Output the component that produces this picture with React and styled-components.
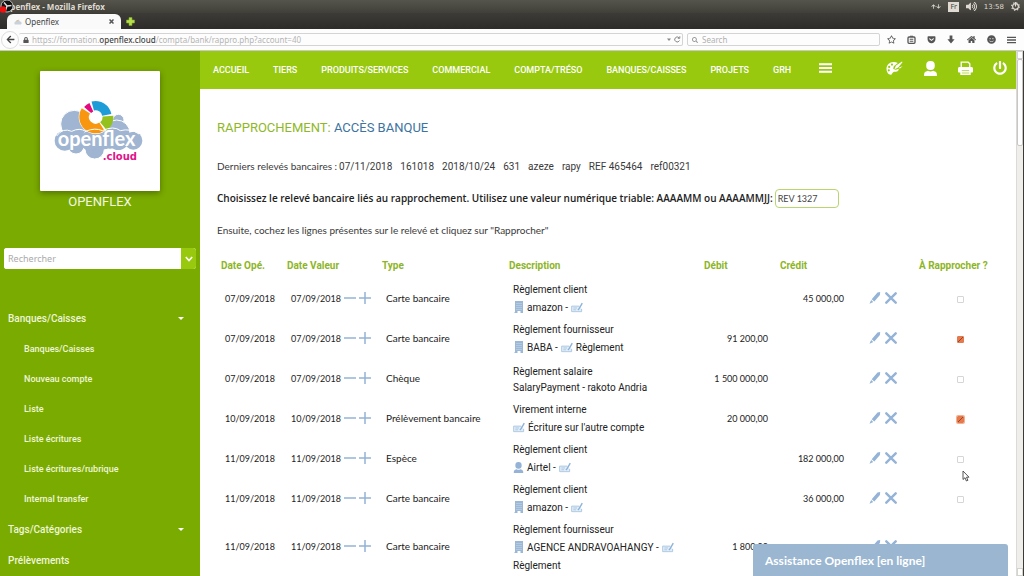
import React, {useState} from 'react';
import styled, {createGlobalStyle, css} from 'styled-components';
import {FaArrowDown, FaArrowLeft, FaArrowUp, FaHome, FaLock, FaPowerOff, FaRegStar, FaSearch, FaSmile, FaVolumeUp} from 'react-icons/fa';
import {FaGetPocket} from 'react-icons/fa6';

const navLinks = ['ACCUEIL', 'TIERS', 'PRODUITS/SERVICES', 'COMMERCIAL', 'COMPTA/TRÉSO', 'BANQUES/CAISSES', 'PROJETS', 'GRH'];

const subLinks = ['Banques/Caisses', 'Nouveau compte', 'Liste', 'Liste écritures', 'Liste écritures/rubrique', 'Internal transfer'];

const statements = ['07/11/2018', '161018', '2018/10/24', '631', 'azeze', 'rapy', 'REF 465464', 'ref00321'];

const entries = [
    {id: 1, date: '07/09/2018', type: 'Carte bancaire', title: 'Règlement client', icon: 'company', name: 'amazon -', cheque: true, credit: '45 000,00'},
    {id: 2, date: '07/09/2018', type: 'Carte bancaire', title: 'Règlement fournisseur', icon: 'company', name: 'BABA -', cheque: true, after: 'Règlement', debit: '91 200,00', checked: true},
    {id: 3, date: '07/09/2018', type: 'Chèque', title: 'Règlement salaire', note: 'SalaryPayment - rakoto Andria', debit: '1 500 000,00'},
    {id: 4, date: '10/09/2018', type: 'Prélèvement bancaire', title: 'Virement interne', cheque: true, after: "Écriture sur l'autre compte", debit: '20 000,00', checked: true, focused: true},
    {id: 5, date: '11/09/2018', type: 'Espèce', title: 'Règlement client', icon: 'person', name: 'Airtel -', cheque: true, credit: '182 000,00'},
    {id: 6, date: '11/09/2018', type: 'Carte bancaire', title: 'Règlement client', icon: 'company', name: 'amazon -', cheque: true, credit: '36 000,00'},
    {id: 7, date: '11/09/2018', type: 'Carte bancaire', title: 'Règlement fournisseur', icon: 'company', name: 'AGENCE ANDRAVOAHANGY -', cheque: true, note: 'Règlement', debit: '1 800,00'},
];

const PersonIcon = ({size = 14}) => (
    <svg width={size} height={size} viewBox="0 0 14 14" fill="currentColor" aria-hidden="true">
        <rect x="3" y="0" width="8" height="8.5" rx="3.8"/>
        <path d="M1 14v-1.6C1 10.200 3.200 9.600 4.600 9.200c1.400.9 3.400.9 4.800 0 1.400.4 3.600 1 3.600 3.200V14z"/>
    </svg>
);

const PaletteIcon = () => (
    <svg width="17" height="15" viewBox="0 0 17 15" aria-hidden="true">
        <path fill="currentColor" fillRule="evenodd" d="M7.500 1C3.500 1 .5 4 .5 7.800c0 3.200 1.800 6 4.200 6 1.800 0 1.300-2.200 2.800-2.800 2-.7 5 .3 5.300-3.300L9.800 8.700 7.200 8l.6-2.700L11.800 2C10.600 1.300 9.200 1 7.500 1zM6 2.500a1.100 1.100 0 1 1 0 2.200 1.100 1.100 0 0 1 0-2.200zM3.200 4.800a1.100 1.100 0 1 1 0 2.200 1.100 1.100 0 0 1 0-2.200zM2.800 8.200a1.100 1.100 0 1 1 0 2.200 1.100 1.100 0 0 1 0-2.200z"/>
        <path fill="currentColor" d="M16.500 1.200 12.200 6.500 8.500 8.200l1.300-3.400L16 .5zM13 6.500l3.500-1.200-2.800 2.500z"/>
    </svg>
);

const PrinterIcon = () => (
    <svg width="15" height="15" viewBox="0 0 15 15" aria-hidden="true">
        <path fill="none" stroke="currentColor" strokeWidth="1.300" d="M3.200 6.500V1.200h7l1.600 1.600v3.700"/>
        <path fill="currentColor" d="M1.500 6h12c.9 0 1.500.6 1.500 1.500v3c0 .6-.4 1-1 1h-1.300V14H2.300v-2.500H1c-.6 0-1-.4-1-1v-3C0 6.600.6 6 1.500 6z"/>
        <path stroke="#98c90f" strokeWidth=".7" d="M3.800 9.600h7.400M3.800 12h7.400"/>
    </svg>
);

const MenuIcon = ({width, height}) => (
    <svg width={width} height={height} viewBox="0 0 12 9" stroke="currentColor" strokeWidth="1.800" aria-hidden="true">
        <path d="M0 1h12M0 4.500h12M0 8h12"/>
    </svg>
);

const ClipboardIcon = () => (
    <svg width="9" height="9" viewBox="0 0 9 9" fill="none" stroke="currentColor" aria-hidden="true">
        <rect x="1" y="2" width="7" height="6.300" rx="1" strokeWidth="1.300"/>
        <path d="M3 1.200h3M2.700 4.300h3.600M2.700 6.200h3.600" strokeWidth="1.100"/>
    </svg>
);

const DownloadIcon = () => (
    <svg width="8" height="9" viewBox="0 0 8 9" fill="currentColor" aria-hidden="true">
        <path d="M2.600.5h2.800v3.700h2.200L4 8.500.4 4.200h2.200z"/>
    </svg>
);

const CompanyIcon = () => (
    <svg width="11" height="12" viewBox="0 0 11 12" aria-hidden="true">
        <path fill="#9bb8d6" d="M2 0h8v12H7.500v-2h-3v2H1.500V11H2z"/>
        <path stroke="#c6d7e8" strokeWidth=".6" d="M3 2.500h6M3 4.500h6M3 6.500h6M3 8.500h6"/>
    </svg>
);

const ChequeIcon = () => (
    <svg width="12" height="11" viewBox="0 0 13 11" fill="none" aria-hidden="true">
        <path d="M9 4H.7v6h10.800V7" fill="#e3edf6" stroke="#a9c7e3"/>
        <path d="M2.500 6h4M2.500 8h3" stroke="#a9c7e3"/>
        <path d="M12.200.8 9 6.500 7.500 8.200" stroke="#8db3d9" strokeWidth="1.500"/>
    </svg>
);

const MinusIcon = () => (
    <svg width="12" height="12" viewBox="0 0 12 12" stroke="currentColor" strokeWidth="1.500" aria-hidden="true">
        <path d="M0 6h12"/>
    </svg>
);

const PlusIcon = () => (
    <svg width="12" height="12" viewBox="0 0 12 12" stroke="currentColor" strokeWidth="1.500" aria-hidden="true">
        <path d="M0 6h12M6 0v12"/>
    </svg>
);

const PencilIcon = () => (
    <svg width="12" height="12" viewBox="0 0 12 12" aria-hidden="true">
        <path fill="currentColor" d="M8.500.5 11.200 0l-.3 2.900L5.300 9.500 2.700 7.300zM2.100 8.100l2.200 1.800L.5 11.800z"/>
    </svg>
);

const CrossIcon = () => (
    <svg width="12" height="12" viewBox="0 0 12 12" stroke="currentColor" strokeWidth="2.400" strokeLinecap="round" aria-hidden="true">
        <path d="M1.300 1.300l9.400 9.400M10.700 1.300l-9.400 9.400"/>
    </svg>
);

// A slice of the ring in the logo, between two angles in degrees
const ringSlice = (from, to, outer, inner) => {
    const point = (angle, radius) => {
        const rad = angle * Math.PI / 180;
        return `${(287 + Math.cos(rad) * radius).toFixed(1)} ${(171 + Math.sin(rad) * radius).toFixed(1)}`;
    };
    return `M${point(from, outer)}A${outer} ${outer} 0 0 1 ${point(to, outer)}L${point(to, inner)}A${inner} ${inner} 0 0 0 ${point(from, inner)}Z`;
};

const Logo = () => (
    <svg width="120" height="120" viewBox="120 33 360 360" role="img" aria-label="openflex.cloud">
        <g fill="#9fb5d1" stroke="#fff" strokeWidth="3">
            <circle cx="355" cy="180" r="17"/>
            <circle cx="223" cy="192" r="41"/>
            <circle cx="284" cy="268" r="29"/>
            <circle cx="228" cy="258" r="24"/>
            <circle cx="350" cy="220" r="40"/>
            <circle cx="330" cy="246" r="22"/>
        </g>
        <g fill="#9fb5d1">
            <circle cx="194" cy="242" r="30"/>
            <circle cx="229" cy="238" r="27"/>
            <circle cx="270" cy="242" r="30"/>
            <circle cx="312" cy="240" r="28"/>
            <circle cx="355" cy="238" r="32"/>
            <circle cx="400" cy="242" r="27"/>
        </g>
        <circle cx="287" cy="171" r="51" fill="#fff"/>
        <path d={ringSlice(-105, -11, 48, 20)} fill="#1d9cd8"/>
        <path d={ringSlice(-4, 50, 53, 21)} fill="#95c11f"/>
        <path d={ringSlice(57, 212, 49, 20)} fill="#f9960f"/>
        <path d={ringSlice(221, 246, 46, 18)} fill="#e5087e"/>
        <path d="M170 228q18-26 45-14 24-12 42 0 28-12 50-2 34-16 54 0 30-8 56 10" fill="none" stroke="#fff" strokeWidth="3"/>
        <LogoText x="173" y="257" fontSize="60" fill="#fff">openflex</LogoText>
        <LogoSuffix x="308" y="299" fontSize="30" fill="#e0148a">.cloud</LogoSuffix>
    </svg>
);

const App = () => {
    const [checked, setChecked] = useState(entries.filter(entry => entry.checked).map(entry => entry.id));

    const toggle = (id) => {
        setChecked(checked.includes(id) ? checked.filter(item => item !== id) : [...checked, id]);
    };

    return (
        <Window>
            <GlobalStyle/>
            <TitleBar>
                <WindowTitle>Openflex - Mozilla Firefox</WindowTitle>
                <Recorder width="14" height="13" viewBox="0 0 14 13" aria-hidden="true">
                    <circle cx="7" cy="6" r="6" fill="#111" stroke="#ddd" strokeWidth=".8"/>
                    <path d="M7 6 4 2.500M7 6l4.500-.5M7 6 5.500 10.500" stroke="#ddd" strokeWidth="1.400"/>
                    <circle cx="3" cy="9.500" r="3.200" fill="#f01010"/>
                </Recorder>
                <Indicators>
                    <Arrows><FaArrowUp/><FaArrowDown/></Arrows>
                    <Language>Fr</Language>
                    <FaVolumeUp size={11}/>
                    <span>13:58</span>
                    <svg width="9" height="9" viewBox="0 0 10 10" fill="none" stroke="currentColor" aria-hidden="true">
                        <circle cx="5" cy="5" r="3.200" strokeWidth="1.300"/>
                        <circle cx="5" cy="5" r="4.300" strokeWidth="1.200" strokeDasharray="1.500 1.900"/>
                        <path d="M5 0v5" strokeWidth="1.300"/>
                    </svg>
                </Indicators>
            </TitleBar>
            <TabStrip>
                <Tab>
                    <svg width="8" height="6" viewBox="0 0 8 6" aria-hidden="true">
                        <path d="M1 5.500a1.800 1.800 0 0 1 .5-3 2.500 2.500 0 0 1 4.500 0 1.600 1.600 0 0 1 .8 3z" fill="#c8d2dc"/>
                        <path d="M3 2.500 4.500.8" stroke="#f5b35a"/>
                    </svg>
                    <TabTitle>Openflex</TabTitle>
                    <TabButton aria-label="Fermer l'onglet">
                        <svg width="5" height="5" viewBox="0 0 5 5" stroke="#555" strokeWidth="1.500"><path d="M.5.5l4 4M4.500.5l-4 4"/></svg>
                    </TabButton>
                </Tab>
                <TabButton aria-label="Nouvel onglet">
                    <svg width="9" height="9" viewBox="0 0 9 9"><path d="M3 .5h3V3h2.500v3H6v2.500H3V6H.5V3H3z" fill="#b5e04a" stroke="#7fa82a" strokeWidth=".6"/></svg>
                </TabButton>
            </TabStrip>
            <Toolbar>
                <BackButton aria-label="Retour"><FaArrowLeft size={9}/></BackButton>
                <AddressBar>
                    <FaLock size={6}/>
                    <Address>https://formation.<b>openflex.cloud</b>/compta/bank/rappro.php?account=40</Address>
                    <svg width="14" height="7" viewBox="0 0 14 7" fill="none" stroke="#888" aria-hidden="true">
                        <path d="M0 2.500h4L2 5z" fill="#888" stroke="none"/>
                        <path d="M12.500 4.500A2.500 2.500 0 1 1 12 1.700M12.800.3v2h-2"/>
                    </svg>
                </AddressBar>
                <SearchBar>
                    <FaSearch size={6}/>
                    <input type="search" placeholder="Search" aria-label="Search"/>
                </SearchBar>
                <BrowserIcons>
                    <FaRegStar size={9}/>
                    <ClipboardIcon/>
                    <FaGetPocket size={9}/>
                    <DownloadIcon/>
                    <FaHome size={9}/>
                    <FaSmile size={9}/>
                    <MenuIcon width={9} height={8}/>
                </BrowserIcons>
            </Toolbar>
            <Page>
                <Sidebar>
                    <LogoCard><Logo/></LogoCard>
                    <Brand>OPENFLEX</Brand>
                    <SideSearch>
                        <input type="text" placeholder="Rechercher" aria-label="Rechercher"/>
                        <button aria-label="Options">
                            <svg width="8" height="6" viewBox="0 0 8 6" fill="none" stroke="#fff" strokeWidth="1.600"><path d="M.8 1 4 4.500 7.200 1"/></svg>
                        </button>
                    </SideSearch>
                    <nav>
                        <SideLink href="#">Banques/Caisses<Caret/></SideLink>
                        {subLinks.map(link => <SideLink key={link} href="#" $sub>{link}</SideLink>)}
                        <SideLink href="#">Tags/Catégories<Caret/></SideLink>
                        <SideLink href="#">Prélèvements</SideLink>
                    </nav>
                </Sidebar>
                <Main>
                    <NavBar>
                        <NavLinks>
                            {navLinks.map(link => <NavLink key={link} href="#">{link}</NavLink>)}
                        </NavLinks>
                        <NavButton aria-label="Menu"><MenuIcon width={13} height={10}/></NavButton>
                        <NavTools>
                            <NavButton aria-label="Thème"><PaletteIcon/></NavButton>
                            <NavButton aria-label="Compte"><PersonIcon size={15}/></NavButton>
                            <NavButton aria-label="Imprimer"><PrinterIcon/></NavButton>
                            <NavButton aria-label="Déconnexion"><FaPowerOff size={14}/></NavButton>
                        </NavTools>
                    </NavBar>
                    <Content>
                        <Title>RAPPROCHEMENT: <span>ACCÈS BANQUE</span></Title>
                        <Line>
                            Derniers relevés bancaires :
                            <Statements>{statements.map(item => <span key={item}>{item}</span>)}</Statements>
                        </Line>
                        <Line>
                            <Label htmlFor="releve">Choisissez le relevé bancaire liés au rapprochement. Utilisez une valeur numérique triable: AAAAMM ou AAAAMMJJ:</Label>
                            <StatementInput id="releve" type="text" defaultValue="REV 1327"/>
                        </Line>
                        <Line>Ensuite, cochez les lignes présentes sur le relevé et cliquez sur "Rapprocher"</Line>
                        <Table>
                            <colgroup>
                                <Col $width={66}/>
                                <Col $width={95}/>
                                <Col $width={127}/>
                                <Col $width={195}/>
                                <Col $width={76}/>
                                <Col $width={76}/>
                                <Col $width={63}/>
                                <Col $width={85}/>
                            </colgroup>
                            <thead>
                                <tr>
                                    <th>Date Opé.</th>
                                    <th>Date Valeur</th>
                                    <th>Type</th>
                                    <th>Description</th>
                                    <th>Débit</th>
                                    <th>Crédit</th>
                                    <th></th>
                                    <th>À Rapprocher ?</th>
                                </tr>
                            </thead>
                            <tbody>
                                {entries.map(entry => (
                                    <tr key={entry.id}>
                                        <DateCell>{entry.date}</DateCell>
                                        <DateCell>
                                            <Group $gap={3}>
                                                {entry.date}
                                                <IconButton aria-label="Reculer la date"><MinusIcon/></IconButton>
                                                <IconButton aria-label="Avancer la date"><PlusIcon/></IconButton>
                                            </Group>
                                        </DateCell>
                                        <td>{entry.type}</td>
                                        <td>
                                            <Description>
                                                <DescriptionLine>{entry.title}</DescriptionLine>
                                                {entry.cheque && (
                                                    <DescriptionLine $tall>
                                                        {entry.icon === 'company' && <CompanyIcon/>}
                                                        {entry.icon === 'person' && <Blue><PersonIcon size={11}/></Blue>}
                                                        {entry.name}
                                                        <ChequeIcon/>
                                                        {entry.after}
                                                    </DescriptionLine>
                                                )}
                                                {entry.note && <DescriptionLine>{entry.note}</DescriptionLine>}
                                            </Description>
                                        </td>
                                        <Amount>{entry.debit}</Amount>
                                        <Amount>{entry.credit}</Amount>
                                        <td>
                                            <Group $gap={4} $center>
                                                <IconButton aria-label="Modifier"><PencilIcon/></IconButton>
                                                <IconButton aria-label="Supprimer"><CrossIcon/></IconButton>
                                            </Group>
                                        </td>
                                        <CheckCell>
                                            <Checkbox
                                                type="checkbox"
                                                aria-label="À rapprocher"
                                                checked={checked.includes(entry.id)}
                                                onChange={() => toggle(entry.id)}
                                                $focused={entry.focused}
                                            />
                                        </CheckCell>
                                    </tr>
                                ))}
                            </tbody>
                        </Table>
                    </Content>
                </Main>
                <Scrollbar>
                    <ScrollArrow/>
                    <Thumb/>
                    <ScrollArrow $down/>
                </Scrollbar>
            </Page>
            <Chat>Assistance Openflex [en ligne]</Chat>
            <Pointer width="8" height="12" viewBox="0 0 8 12" aria-hidden="true">
                <path d="M1 1v8.500l2-1.800 1.400 3.300 1.500-.7-1.400-3.100H7z" fill="#fff" stroke="#444" strokeWidth=".9"/>
            </Pointer>
        </Window>
    );
};

const GlobalStyle = createGlobalStyle`
  * {
    box-sizing: border-box;
  }

  body {
    margin: 0;
    font-family: Roboto, sans-serif;
    overflow: hidden;
  }

  button {
    border: none;
    background: none;
    padding: 0;
    cursor: pointer;
  }

  svg {
    flex-shrink: 0;
    display: block;
  }
`;

const Window = styled.div`
  position: relative;
  display: flex;
  flex-direction: column;
  height: 100vh;
  overflow: hidden;
  background: white;
`;

const TitleBar = styled.div`
  position: relative;
  display: flex;
  align-items: center;
  justify-content: space-between;
  height: 13px;
  padding: 0 4px;
  background: linear-gradient(#55544c, #403f39);
  color: #dfdbd2;
  font-family: "DejaVu Sans", sans-serif;
  font-size: 8px;
`;

const WindowTitle = styled.span`
  font-family: "Noto Sans", sans-serif;
  font-weight: 700;
`;

const Recorder = styled.svg`
  position: absolute;
  left: 0;
  top: 0;
`;

const Indicators = styled.div`
  display: flex;
  align-items: center;
  gap: 7px;
  font-size: 7px;
`;

const Arrows = styled.span`
  display: flex;
  font-size: 5px;
`;

const Language = styled.span`
  padding: 0 2px;
  background: #dfdbd2;
  color: #45443e;
  font-size: 7px;
  line-height: 10px;
`;

const TabStrip = styled.div`
  display: flex;
  align-items: flex-end;
  gap: 5px;
  height: 16px;
  padding-left: 7px;
  background: linear-gradient(#3c3b37, #2d2c29);
`;

const Tab = styled.div`
  display: flex;
  align-items: center;
  gap: 3px;
  width: 114px;
  height: 15px;
  padding: 0 7px;
  border-radius: 6px 6px 0 0;
  background: #fafafa;
`;

const TabTitle = styled.span`
  flex: 1;
  color: #444;
  font-family: "Noto Sans", sans-serif;
  font-size: 8px;
`;

const TabButton = styled.button`
  align-self: center;
`;

const Toolbar = styled.div`
  display: flex;
  align-items: center;
  height: 22px;
  padding: 0 8px 0 1px;
  background: #fdfdfd;
  border-bottom: 1px solid #c9c9c9;
  color: #555;
`;

const BackButton = styled.button`
  display: flex;
  align-items: center;
  justify-content: center;
  width: 18px;
  height: 18px;
  border: 1px solid #ddd;
  border-radius: 50%;
  color: #444;
`;

const field = css`
  display: flex;
  align-items: center;
  height: 13px;
  border: 1px solid #d4d4d4;
  border-radius: 2px;
  font-family: "Noto Sans", sans-serif;
  font-size: 8px;
`;

const AddressBar = styled.div`
  ${field};
  flex: 1;
  gap: 3px;
  padding: 0 1px 0 4px;
  border-left: none;
`;

const Address = styled.span`
  flex: 1;
  color: #b4b4b4;

  b {
    color: #444;
    font-weight: 500;
  }
`;

const SearchBar = styled.div`
  ${field};
  flex: 0 1 193px;
  gap: 4px;
  margin-left: 4px;
  padding: 0 4px;
  color: #999;

  input {
    width: 100%;
    padding: 0;
    border: none;
    background: none;
    font: inherit;
  }

  input::placeholder {
    color: #b0b0b0;
  }
`;

const BrowserIcons = styled.div`
  display: flex;
  align-items: center;
  justify-content: space-between;
  width: 129px;
  margin-left: 7px;
`;

const Page = styled.div`
  flex: 1;
  display: flex;
  min-height: 0;
  border-right: 1px solid #3c3b37;
`;

const Sidebar = styled.aside`
  flex: 0 0 200px;
  display: flex;
  flex-direction: column;
  padding: 20px 4px 0;
  background: #7aab00;
`;

const LogoCard = styled.div`
  align-self: center;
  background: white;
  border-radius: 1px;
  box-shadow: 0 2px 6px rgba(0, 0, 0, 0.35);
`;

const LogoText = styled.text`
  font-family: Lato, sans-serif;
  font-weight: 700;
`;

const LogoSuffix = styled.text`
  font-family: "DejaVu Sans", sans-serif;
  font-weight: 700;
`;

const Brand = styled.div`
  margin: 2px 0 37px;
  color: #f4f9e4;
  font-size: 13px;
  line-height: 18px;
  text-align: center;
`;

const SideSearch = styled.div`
  display: flex;
  height: 24px;
  margin-bottom: 34px;
  border-radius: 3px;
  overflow: hidden;
  background: white;

  input {
    flex: 1;
    min-width: 0;
    padding: 0 4px;
    border: none;
    font-family: "Noto Sans", sans-serif;
    font-size: 9px;
  }

  input::placeholder {
    color: #aaa;
  }

  button {
    display: flex;
    align-items: center;
    justify-content: center;
    width: 15px;
    background: #98c90f;
  }
`;

const SideLink = styled.a`
  display: flex;
  align-items: center;
  justify-content: space-between;
  height: ${({$sub}) => $sub ? '30px' : '31px'};
  padding: ${({$sub}) => $sub ? '0 12px 0 20px' : '0 12px 0 4px'};
  color: #eff6d8;
  font-size: ${({$sub}) => $sub ? '9px' : '10px'};
  font-weight: 500;
  text-decoration: none;
`;

const Caret = styled.span`
  border: 3px solid transparent;
  border-top-color: white;
  border-bottom: none;
`;

const Main = styled.main`
  flex: 1;
  min-width: 0;
`;

const NavBar = styled.nav`
  display: flex;
  align-items: center;
  gap: 28px;
  height: 38px;
  padding: 0 9px 0 13px;
  background: #98c90f;
`;

const NavLinks = styled.div`
  display: flex;
  align-items: center;
  gap: 24px;
`;

const NavLink = styled.a`
  color: white;
  font-size: 9px;
  font-weight: 500;
  text-decoration: none;
`;

const NavTools = styled.div`
  display: flex;
  align-items: center;
  gap: 20px;
  margin-left: auto;
`;

const IconButton = styled.button`
  color: #94b3d6;
`;

const NavButton = styled.button`
  padding-bottom: 4px;
  color: white;
`;

const Content = styled.div`
  padding: 23px 16px 0 17px;
`;

const Title = styled.h1`
  margin: 0 0 6px;
  color: #8fb828;
  font-size: 13px;
  font-weight: 400;
  line-height: 32px;

  span {
    color: #3d73a0;
  }
`;

const Line = styled.div`
  display: flex;
  align-items: center;
  gap: 2px;
  height: 32px;
  color: #3a3a3a;
  font-family: Lato, sans-serif;
  font-size: 10px;
  white-space: nowrap;
`;

const Statements = styled.span`
  display: flex;
  gap: 8px;
  font-family: Roboto, sans-serif;
`;

const Label = styled.label`
  color: #222;
  font-family: "Open Sans", sans-serif;
  font-weight: 600;
`;

const StatementInput = styled.input`
  width: 64px;
  height: 19px;
  padding: 0 2px;
  border: 1px solid #b9d66e;
  border-radius: 4px;
  color: #444;
  font-family: Lato, sans-serif;
  font-size: 9px;
`;

const Table = styled.table`
  width: 100%;
  margin-top: 6px;
  border-collapse: collapse;
  table-layout: fixed;
  color: #222;
  font-size: 10px;

  th {
    height: 27px;
    padding: 0 4px;
    color: #8db526;
    font-weight: 700;
    text-align: left;
    white-space: nowrap;
  }

  td {
    height: 40px;
    padding: 0 8px 2px;
    font-family: Lato, sans-serif;
    white-space: nowrap;
  }
`;

const Col = styled.col`
  width: ${({$width}) => $width / 7.83}%;
`;

const Group = styled.div`
  display: flex;
  align-items: center;
  justify-content: ${({$center}) => $center ? 'center' : 'flex-start'};
  gap: ${({$gap}) => $gap}px;
`;

const Description = styled.div`
  padding-top: 2px;
  font-family: Roboto, sans-serif;
`;

const DescriptionLine = styled.div`
  display: flex;
  align-items: center;
  gap: 3px;
  height: ${({$tall}) => $tall ? '20px' : '16px'};
`;

const Blue = styled.span`
  color: #94b3d6;
`;

const DateCell = styled.td`
  font-size: 9px;
`;

const Amount = styled.td`
  font-size: 9px;
  text-align: right;
`;

const CheckCell = styled.td`
  && {
    padding: 0 2px 0 8px;
  }

  text-align: center;
`;

const Checkbox = styled.input`
  appearance: none;
  width: 7px;
  height: 7px;
  margin: 0;
  border: 1px solid #d5d5d5;
  border-radius: 1px;
  background: white;

  &:checked {
    border-color: #e07a50;
    background: linear-gradient(135deg, #e8794c 45%, #9a4526 45%, #9a4526 60%, #e8794c 60%);
    box-shadow: ${({$focused}) => $focused ? '0 0 0 1px #f7b08e' : 'none'};
  }
`;

const Scrollbar = styled.div`
  display: flex;
  flex-direction: column;
  width: 7px;
  background: #efeeeb;
  border-left: 1px solid #dcdad6;
`;

const ScrollArrow = styled.span`
  height: 8px;
  margin-top: ${({$down}) => $down ? 'auto' : '0'};
  border: 1px solid #d5d3cf;
  background: white;
`;

const Thumb = styled.span`
  height: 87px;
  border: 1px solid #c9c7c3;
  border-radius: 2px;
  background: white;
`;

const Chat = styled.div`
  position: absolute;
  right: 16px;
  bottom: 0;
  width: 255px;
  height: 32px;
  padding: 0 12px;
  border-radius: 3px 3px 0 0;
  background: #9ab6d1;
  color: white;
  font-family: Lato, sans-serif;
  font-size: 12px;
  font-weight: 700;
  line-height: 33px;
`;

const Pointer = styled.svg`
  position: absolute;
  left: 962px;
  top: 470px;
`;

export default App;
